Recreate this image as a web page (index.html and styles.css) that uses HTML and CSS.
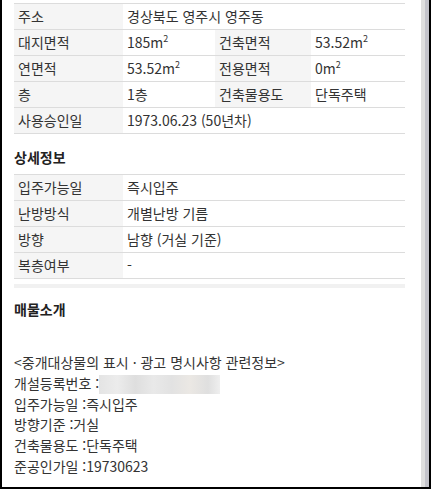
FILE: index.html
```html
<!DOCTYPE html>
<html lang="ko">
<head>
<meta charset="utf-8">
<title>매물 정보</title>
<link rel="stylesheet" href="styles.css">
</head>
<body>
<div class="frame">
  <main class="content">
    <table class="info info-4">
      <colgroup><col class="c1"><col class="c2"><col class="c3"><col class="c4"></colgroup>
      <tr><th>주소</th><td colspan="3">경상북도 영주시 영주동</td></tr>
      <tr><th>대지면적</th><td>185m<sup>2</sup></td><th>건축면적</th><td>53.52m<sup>2</sup></td></tr>
      <tr><th>연면적</th><td>53.52m<sup>2</sup></td><th>전용면적</th><td>0m<sup>2</sup></td></tr>
      <tr><th>층</th><td>1층</td><th>건축물용도</th><td>단독주택</td></tr>
      <tr><th>사용승인일</th><td colspan="3">1973.06.23 (50년차)</td></tr>
    </table>

    <h3 class="sec-title">상세정보</h3>
    <table class="info info-2">
      <colgroup><col class="c1"><col></colgroup>
      <tr><th>입주가능일</th><td>즉시입주</td></tr>
      <tr><th>난방방식</th><td>개별난방 기름</td></tr>
      <tr><th>방향</th><td>남향 (거실 기준)</td></tr>
      <tr><th>복층여부</th><td>-</td></tr>
    </table>
    <div class="divider"></div>

    <h3 class="sec-title sec-intro">매물소개</h3>
    <div class="desc">
      <p>&lt;중개대상물의 표시 · 광고 명시사항 관련정보&gt;</p>
      <p>개설등록번호 :<span class="blur"></span></p>
      <p>입주가능일 :즉시입주</p>
      <p>방향기준 :거실</p>
      <p>건축물용도 :단독주택</p>
      <p>준공인가일 :19730623</p>
    </div>
  </main>
  <div class="scrollbar"><div class="track"></div><div class="thumb"></div></div>
</div>
</body>
</html>
```

FILE: styles.css
```css
* { box-sizing: border-box; }
html, body { margin: 0; padding: 0; background: #fff; }
body {
  font-family: "Noto Sans CJK KR", "Noto Sans", sans-serif;
  font-size: 14px;
  color: #333;
  font-feature-settings: "palt";
}
.frame {
  width: 431px;
  height: 489px;
  display: flex;
  border-left: 2px solid #000;
  border-right: 2px solid #000;
  border-bottom: 2px solid #000;
  overflow: hidden;
}
.content {
  flex: 1;
  padding: 3px 14px 0 12px;
  overflow: hidden;
}
.scrollbar { display: flex; }
.track { width: 4px; background: #dedede; }
.thumb { width: 4px; background: #c3c3ca; }

.info {
  width: 391px;
  border-collapse: collapse;
  table-layout: fixed;
  border-top: 1px solid #dcdcdc;
}
.info-4 .c1 { width: 109px; }
.info-4 .c2 { width: 92px; }
.info-4 .c3 { width: 96px; }
.info-4 .c4 { width: 94px; }
.info-2 .c1 { width: 109px; }
.info th, .info td {
  height: 26px;
  padding: 0 4px;
  border-bottom: 1px solid #dcdcdc;
  text-align: left;
  font-weight: normal;
  white-space: nowrap;
  line-height: 25px;
}
.info th { background: #f5f5f5; color: #333; }
.info td { background: #fff; }
.info sup { font-size: 9px; line-height: 0; vertical-align: 6px; }

.sec-title {
  margin: 0;
  font-size: 14px;
  font-weight: bold;
  color: #222;
  padding: 13px 0 7px;
  line-height: 20px;
}
.divider {
  margin-top: 5px;
  height: 4px;
  background: #f1f1f1;
  width: 391px;
}
.sec-intro { padding: 11px 0 0; }
.desc { margin-top: 33px; }
.desc p { margin: 0; line-height: 20.8px; height: 20.8px; white-space: nowrap; }
.blur {
  display: inline-block;
  width: 121px;
  height: 19px;
  vertical-align: -5px;
  background: linear-gradient(90deg, #e4e4e4 0%, #ececec 15%, #dedede 30%, #e9e9e9 45%, #e2e2e2 60%, #ebe8e4 75%, #dfdfdf 90%, #efefef 100%);
}
```
